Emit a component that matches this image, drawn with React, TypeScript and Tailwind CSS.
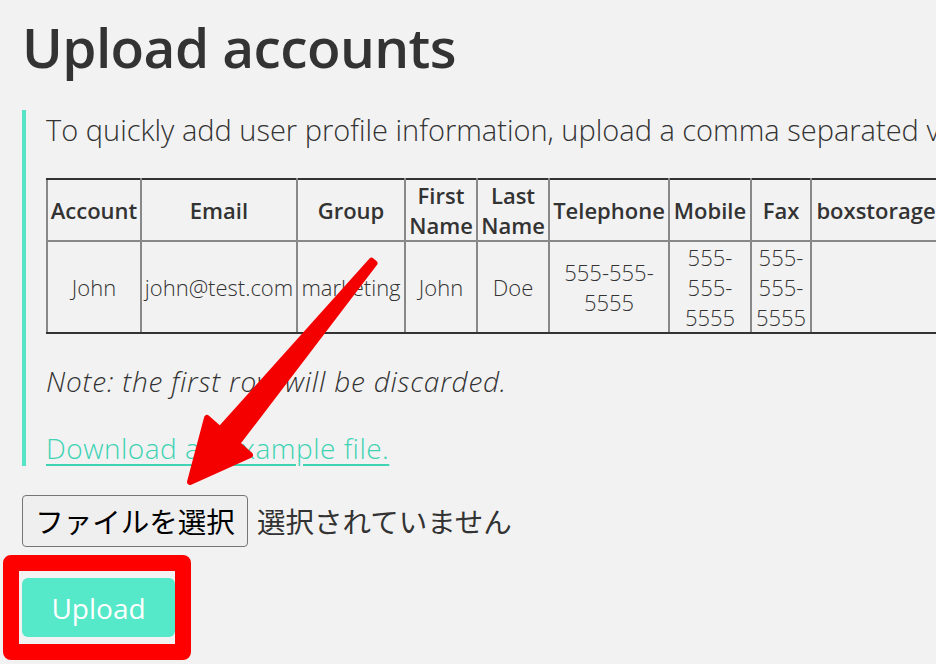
const headers: { label: React.ReactNode; w: number }[] = [
  { label: "Account", w: 94 },
  { label: "Email", w: 156 },
  { label: "Group", w: 108 },
  { label: <>First<br />Name</>, w: 72 },
  { label: <>Last<br />Name</>, w: 72 },
  { label: "Telephone", w: 120 },
  { label: "Mobile", w: 82 },
  { label: "Fax", w: 60 },
  { label: "boxstorage", w: 130 },
];

const row: React.ReactNode[] = [
  "John",
  "john@test.com",
  "marketing",
  "John",
  "Doe",
  <>555-555-<br />5555</>,
  <>555-<br />555-<br />5555</>,
  <>555-<br />555-<br />5555</>,
  "",
];

export default function App() {
  return (
    <div className="relative h-[664px] w-[936px] overflow-hidden bg-[#f2f2f2] font-['Open_Sans',sans-serif] text-[#333]">
      <div className="pl-[22px] pt-[11px]">
        <h1 className="whitespace-nowrap text-[55px] font-semibold leading-[72px] tracking-[-0.6px]">
          Upload accounts
        </h1>

        <div className="mt-[27px] border-l-4 border-[#55e5c6] pl-5">
          <p className="whitespace-nowrap text-[29px] font-light leading-[40px]">
            To quickly add user profile information, upload a comma separated values file
          </p>

          <table className="mt-[28px] w-[894px] table-fixed border-collapse border-2 border-[#333] text-[22px] leading-[30px]">
            <colgroup>
              {headers.map((h, i) => (
                <col key={i} style={{ width: h.w }} />
              ))}
            </colgroup>
            <thead>
              <tr>
                {headers.map((h, i) => (
                  <th
                    key={i}
                    className="h-[60px] border-2 border-[#888] border-t-[#333] px-0 text-center font-semibold whitespace-nowrap"
                  >
                    {h.label}
                  </th>
                ))}
              </tr>
            </thead>
            <tbody>
              <tr>
                {row.map((c, i) => (
                  <td
                    key={i}
                    className="h-[90px] border-2 border-[#888] border-b-[#333] px-0 text-center font-light whitespace-nowrap"
                  >
                    {c}
                  </td>
                ))}
              </tr>
            </tbody>
          </table>

          <p className="mt-[29px] whitespace-nowrap text-[28px] font-light italic leading-[36px] tracking-[0.8px]">
            Note: the first row will be discarded.
          </p>
          <a
            href="#"
            className="mt-[31px] block whitespace-nowrap text-[28px] font-light leading-[36px] tracking-[0.5px] text-[#3fd3b4] underline underline-offset-[5px]"
          >
            Download an example file.
          </a>
        </div>

        <div className="mt-[29px] flex items-center gap-[9px] font-['Noto_Sans_CJK_JP',sans-serif]">
          <button className="h-[52px] w-[226px] rounded-[4px] border border-[#767676] bg-[#efefef] text-[28.5px] text-black">
            ファイルを選択
          </button>
          <span className="text-[28.5px] text-[#333]">選択されていません</span>
        </div>

        <button className="mt-[31px] h-[59px] w-[153px] rounded-[6px] bg-[#55e8c9] text-[28px] text-white">
          Upload
        </button>
      </div>

      {/* annotation: red box */}
      <div className="pointer-events-none absolute left-[3px] top-[555px] h-[105px] w-[188px] rounded-[8px] border-[16px] border-[#ff0000]" />

      {/* annotation: arrow */}
      <svg className="pointer-events-none absolute inset-0" width="936" height="664">
        <polygon
          points="371.5,260.7 220,429.5 207,418 190,482 250,455 237,443.5 374.5,263.3"
          fill="#f50000"
          stroke="#f50000"
          strokeWidth="6"
          strokeLinejoin="round"
        />
      </svg>
    </div>
  );
}
